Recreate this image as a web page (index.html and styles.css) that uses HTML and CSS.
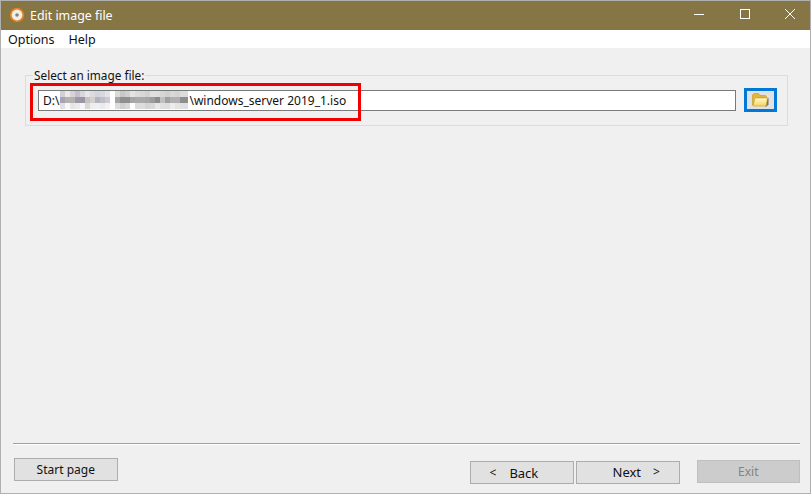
FILE: index.html
```html
<!DOCTYPE html>
<html lang="en">
<head>
    <meta charset="UTF-8">
    <title>Edit image file</title>
    <link rel="stylesheet" href="styles.css">
</head>
<body>
    <div class="window">
        <div class="title-bar">
            <svg class="app-icon" width="16" height="16" viewBox="0 0 16 16">
                <circle cx="8" cy="8" r="7.2" fill="#e8801e"/>
                <circle cx="8" cy="8" r="5.4" fill="#f1efe9"/>
                <circle cx="8" cy="8" r="1.8" fill="#8a7f78"/>
            </svg>
            <span class="title-text">Edit image file</span>
            <div class="window-controls">
                <div class="win-btn">
                    <svg width="10" height="10" viewBox="0 0 10 10"><path d="M0 5.5H10" stroke="#fff" fill="none"/></svg>
                </div>
                <div class="win-btn">
                    <svg width="10" height="10" viewBox="0 0 10 10"><rect x="0.5" y="0.5" width="9" height="9" stroke="#fff" fill="none"/></svg>
                </div>
                <div class="win-btn">
                    <svg width="10" height="10" viewBox="0 0 10 10"><path d="M0 0L10 10M10 0L0 10" stroke="#fff" fill="none"/></svg>
                </div>
            </div>
        </div>

        <div class="menu-bar">
            <span class="menu-item">Options</span>
            <span class="menu-item">Help</span>
        </div>

        <div class="content">
            <fieldset class="file-group">
                <legend>Select an image file:</legend>
                <div class="file-row">
                    <div class="file-input">
                        <span>D:\</span><span class="mosaic"></span><span>\windows_server 2019_1.iso</span>
                    </div>
                    <button class="browse-btn">
                        <svg width="17" height="14" viewBox="0 0 17 14">
                            <defs>
                                <linearGradient id="folderFront" x1="0" y1="0" x2="0" y2="1">
                                    <stop offset="0" stop-color="#fffbd0"/>
                                    <stop offset="1" stop-color="#f8d556"/>
                                </linearGradient>
                            </defs>
                            <path d="M16.5 5V11.5L14.5 13.5H13L15 5Z" fill="#77726c"/>
                            <path d="M0.5 12V2L2 0.5H6.5L8 2.5H13.5L14.5 3.5V5H4L2 12Z" fill="#e3b53c" stroke="#c4951f" stroke-width="0.6"/>
                            <path d="M1 13L3 5H15.5L14 13Z" fill="url(#folderFront)" stroke="#cfa02a" stroke-width="0.6"/>
                        </svg>
                    </button>
                </div>
            </fieldset>
            <div class="highlight"></div>
        </div>

        <div class="footer">
            <div class="separator"></div>
            <div class="footer-row">
                <button class="btn start-btn">Start page</button>
                <div class="nav-group">
                    <button class="btn nav-btn back-btn"><span class="arrow">&lt;</span><span>Back</span></button>
                    <button class="btn nav-btn next-btn"><span>Next</span><span class="arrow">&gt;</span></button>
                </div>
                <button class="btn exit-btn" disabled>Exit</button>
            </div>
        </div>
    </div>
</body>
</html>
```

FILE: styles.css
```css
:root {
    --title-color: #867545;
    --panel-color: #f0f0f0;
    --border-color: #adadad;
    --button-color: #e1e1e1;
    --text-color: #111;
    --font-family: 'Noto Sans', sans-serif;
}

html, body {
    margin: 0;
    padding: 0;
    height: 100%;
}

body {
    font-family: var(--font-family);
    font-size: 12px;
    color: var(--text-color);
}

.window {
    box-sizing: border-box;
    width: 811px;
    height: 494px;
    display: flex;
    flex-direction: column;
    background: var(--panel-color);
    border: 1px solid #b0b0b0;
}

.title-bar {
    height: 29px;
    display: flex;
    align-items: center;
    background: var(--title-color);
    color: #fff;
    padding-left: 8px;
    flex-shrink: 0;
}

.app-icon {
    margin-bottom: 2px;
}

.title-text {
    margin: 0 0 1px 5px;
    font-size: 12.4px;
}

.window-controls {
    margin: 0 -3px 3px auto;
    display: flex;
}

.win-btn {
    width: 45.5px;
    height: 26px;
    display: flex;
    align-items: center;
    justify-content: center;
}

.menu-bar {
    height: 18px;
    background: #fff;
    display: flex;
    align-items: center;
    gap: 14px;
    padding-left: 7px;
    font-size: 12.5px;
    flex-shrink: 0;
}

.content {
    flex: 1;
    position: relative;
    padding: 20px 22px 0 24px;
}

.file-group {
    margin: 0;
    padding: 0 10px 13px 12px;
    border: 1px solid #dcdcdc;
}

.file-group legend {
    padding: 0 1px;
    margin-left: -5px;
    line-height: 14px;
    font-size: 11.8px;
}

.file-row {
    display: flex;
    align-items: center;
    gap: 8px;
    margin-top: 6px;
}

.file-input {
    flex: 1;
    box-sizing: border-box;
    height: 21px;
    display: flex;
    align-items: center;
    padding-left: 4px;
    background: #fff;
    border: 1px solid #7a7a7a;
}

/* blurred part of the path: three rows of 5px blocks */
.mosaic {
    width: 128px;
    height: 18px;
    margin: 0 1px;
    background-repeat: no-repeat;
    background-size: 128px 6px;
    background-position: 0 0, 0 6px, 0 12px;
    background-image:
        linear-gradient(90deg,
            #d2d0d6 0 5px, #eee9e6 5px 10px, #d6d3da 10px 15px, #c4c0cc 15px 20px, #d8d6dc 20px 25px,
            #e6e6e6 25px 30px, #dcdcdc 30px 35px, #d2d6dc 35px 40px, #d4dae0 40px 45px, #e2e4ea 45px 50px,
            #fff 50px 55px, #dadada 55px 60px, #c8c8c8 60px 65px, #d0d0d0 65px 70px, #e4e4e4 70px 75px,
            #dcdcdc 75px 80px, #d8d8d8 80px 85px, #d2d2d2 85px 90px, #e0e0e0 90px 95px, #dedede 95px 100px,
            #d6d6d6 100px 105px, #d0d0d0 105px 110px, #d8d8d8 110px 115px, #d4d4d4 115px 120px, #dcdcdc 120px 128px),
        linear-gradient(90deg,
            #a9a2b4 0 5px, #b5b2aa 5px 10px, #b6b2b4 10px 15px, #9f98a8 15px 20px, #9b94a4 20px 25px,
            #c4c4c0 25px 30px, #d4d0d0 30px 35px, #b4b4c0 35px 40px, #c0bcc8 40px 45px, #cfcad2 45px 50px,
            #fff 50px 55px, #a4a4a4 55px 60px, #8f8f8f 60px 65px, #8f8f8f 65px 70px, #a6a6a6 70px 75px,
            #aaa 75px 80px, #aaa 80px 85px, #a6a6a6 85px 90px, #9c9c9c 90px 95px, #8c8c8c 95px 100px,
            #c0c0c0 100px 105px, #a0a0a0 105px 110px, #b0b0b0 110px 115px, #b0b0b0 115px 120px, #8e8e8e 120px 128px),
        linear-gradient(90deg,
            #e0dfe4 0 5px, #f8f8f8 5px 10px, #e6e6e6 10px 15px, #ebebeb 15px 20px, #f6f6f6 20px 25px,
            #d8d8d8 25px 30px, #eee 30px 35px, #f0f0f4 35px 40px, #eaeaee 40px 45px, #f4f0f4 45px 50px,
            #fff 50px 55px, #dcdcdc 55px 60px, #d0d0d0 60px 65px, #d8d8d8 65px 70px, #fff 70px 75px,
            #dcdcdc 75px 80px, #ddd 80px 85px, #d4d4d4 85px 90px, #d8d8d8 90px 95px, #e8e8e8 95px 100px,
            #e0e0e0 100px 105px, #dedede 105px 110px, #ececec 110px 115px, #e4e4e4 115px 120px, #e0e0e0 120px 128px);
}

.browse-btn {
    width: 33px;
    height: 24px;
    padding: 0;
    display: flex;
    align-items: center;
    justify-content: center;
    background: var(--button-color);
    border: 3px solid #0078d7;
}

.highlight {
    position: absolute;
    left: 29px;
    top: 35px;
    width: 325px;
    height: 32px;
    border: 3px solid #f00000;
}

.footer {
    padding: 0 10px 0 12px;
    flex-shrink: 0;
}

.separator {
    height: 1px;
    background: #a0a0a0;
    border-bottom: 1px solid #fff;
}

.footer-row {
    display: flex;
    height: 48px;
}

.btn {
    box-sizing: border-box;
    width: 104px;
    height: 23px;
    padding: 0;
    font-family: var(--font-family);
    font-size: 12px;
    color: var(--text-color);
    background: var(--button-color);
    border: 1px solid var(--border-color);
}

.start-btn {
    margin: 13px 0 0 1px;
}

.nav-group {
    display: flex;
    gap: 2px;
    margin: 16px 0 0 352px;
}

.nav-btn {
    display: flex;
    align-items: center;
    font-size: 13px;
}

.back-btn {
    padding-left: 19px;
    gap: 13px;
}

.next-btn {
    padding: 0 0 2px 36px;
    gap: 12px;
}

.arrow {
    font-size: 12px;
}

.exit-btn {
    margin: 15px 0 0 17px;
    background: #ccc;
    border-color: #bfbfbf;
    color: #838383;
}
```
